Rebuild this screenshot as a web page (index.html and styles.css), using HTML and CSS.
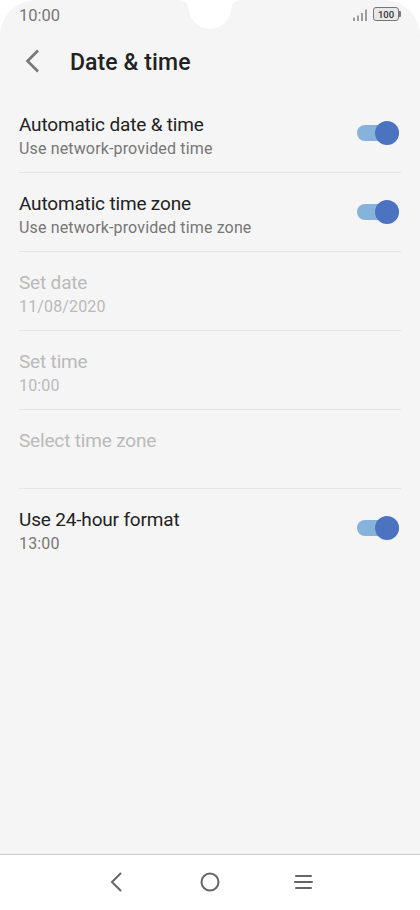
FILE: index.html
```
<!DOCTYPE html>
<html lang="en">
<head>
<meta charset="utf-8">
<title>Date &amp; time</title>
<link rel="stylesheet" href="styles.css">
</head>
<body>
<div class="phone">
  <header class="status">
    <span class="clock">10:00</span>
    <svg class="notch" viewBox="0 0 64 30"><path d="M0 0C7 0 10 3 10.500 8C11.500 20 20 28.700 32 28.700S52.500 20 53.500 8C54 3 57 0 64 0z" fill="#fff"/></svg>
    <div class="indicators">
      <svg class="signal" viewBox="0 0 14 12"><path d="M1 8.500v3.500M5 6.500v5.500M9 4v8M13 0.500v11.500" stroke="#777" stroke-width="1.400"/></svg>
      <span class="battery">100</span>
      <i class="battery-tip"></i>
    </div>
  </header>
  <div class="title">
    <svg class="back" viewBox="0 0 16 24"><path d="M14 1.500 3.500 12 14 22.500" fill="none" stroke="#777" stroke-width="2.600"/></svg>
    <h1>Date &amp; time</h1>
  </div>
  <main class="list">
    <section class="row"><div><h2>Automatic date &amp; time</h2><p>Use network-provided time</p></div><i class="toggle"></i></section>
    <section class="row"><div><h2>Automatic time zone</h2><p>Use network-provided time zone</p></div><i class="toggle"></i></section>
    <section class="row off"><div><h2>Set date</h2><p>11/08/2020</p></div></section>
    <section class="row off"><div><h2>Set time</h2><p>10:00</p></div></section>
    <section class="row off"><div><h2>Select time zone</h2></div></section>
    <section class="row"><div><h2>Use 24-hour format</h2><p>13:00</p></div><i class="toggle"></i></section>
  </main>
  <nav class="nav">
    <svg viewBox="0 0 20 20"><path d="M13.500 1.500 5 10l8.500 8.500"/></svg>
    <svg viewBox="0 0 20 20"><circle cx="10" cy="10" r="8.500"/></svg>
    <svg viewBox="0 0 20 20"><path d="M3 4h15M2 10h17M3 16h15"/></svg>
  </nav>
</div>
</body>
</html>
```
FILE: styles.css
```
* { box-sizing: border-box; margin: 0; padding: 0; }
body { width: 420px; height: 910px; background: #fff; font-family: Roboto, sans-serif; color: #222; }
.phone { height: 910px; display: flex; flex-direction: column; background: #f5f5f5; border-radius: 36px 36px 0 0; overflow: hidden; }
.status { height: 30px; display: grid; grid-template-columns: 1fr 64px 1fr; padding: 0 19px; }
.clock { font-size: 16.5px; line-height: 32px; height: 30px; color: #777; }
.notch { width: 64px; height: 30px; }
.indicators { display: flex; justify-content: flex-end; padding-top: 8px; }
.signal { width: 14px; height: 12px; margin: 1px 6px 0 0; }
.battery { width: 26px; height: 14px; margin-top: -1px; border: 1.5px solid #777; border-radius: 3px; background: #e8e8e8; font-size: 9.5px; font-weight: 500; line-height: 13px; text-align: center; color: #333; }
.battery-tip { width: 2px; height: 6px; margin-top: 3px; background: #777; border-radius: 0 1px 1px 0; }
.title { height: 64px; display: flex; align-items: center; padding-left: 24px; gap: 30px; }
.back { width: 16px; height: 24px; margin-top: -2px; }
h1 { font-size: 23px; font-weight: 500; letter-spacing: 0.1px; padding-top: 1px; }
.list { flex: 1; padding: 0 19px; }
.row { height: 79px; border-bottom: 1px solid #e5e5e5; display: flex; justify-content: space-between; padding-top: 19px; }
.row:last-child { border: 0; }
h2 { font-size: 19px; font-weight: 400; line-height: 24px; letter-spacing: -0.17px; }
p { font-size: 16px; line-height: 24px; color: #777; letter-spacing: 0.15px; }
.off h2, .off p { color: #bababa; }
.toggle { width: 42px; height: 16px; margin: 12px 2px 0 0; display: flex; align-items: center; justify-content: flex-end; background: #86b2db; border-radius: 8px; }
.toggle::after { content: ""; flex: none; width: 24px; height: 24px; border-radius: 50%; background: #4b73bf; }
.nav { height: 56px; background: #fff; border-top: 1px solid #ccc; display: flex; justify-content: center; align-items: center; gap: 73px; padding-bottom: 1px; }
.nav svg { width: 20px; height: 20px; fill: none; stroke: #666; stroke-width: 2; stroke-linecap: round; }
```
